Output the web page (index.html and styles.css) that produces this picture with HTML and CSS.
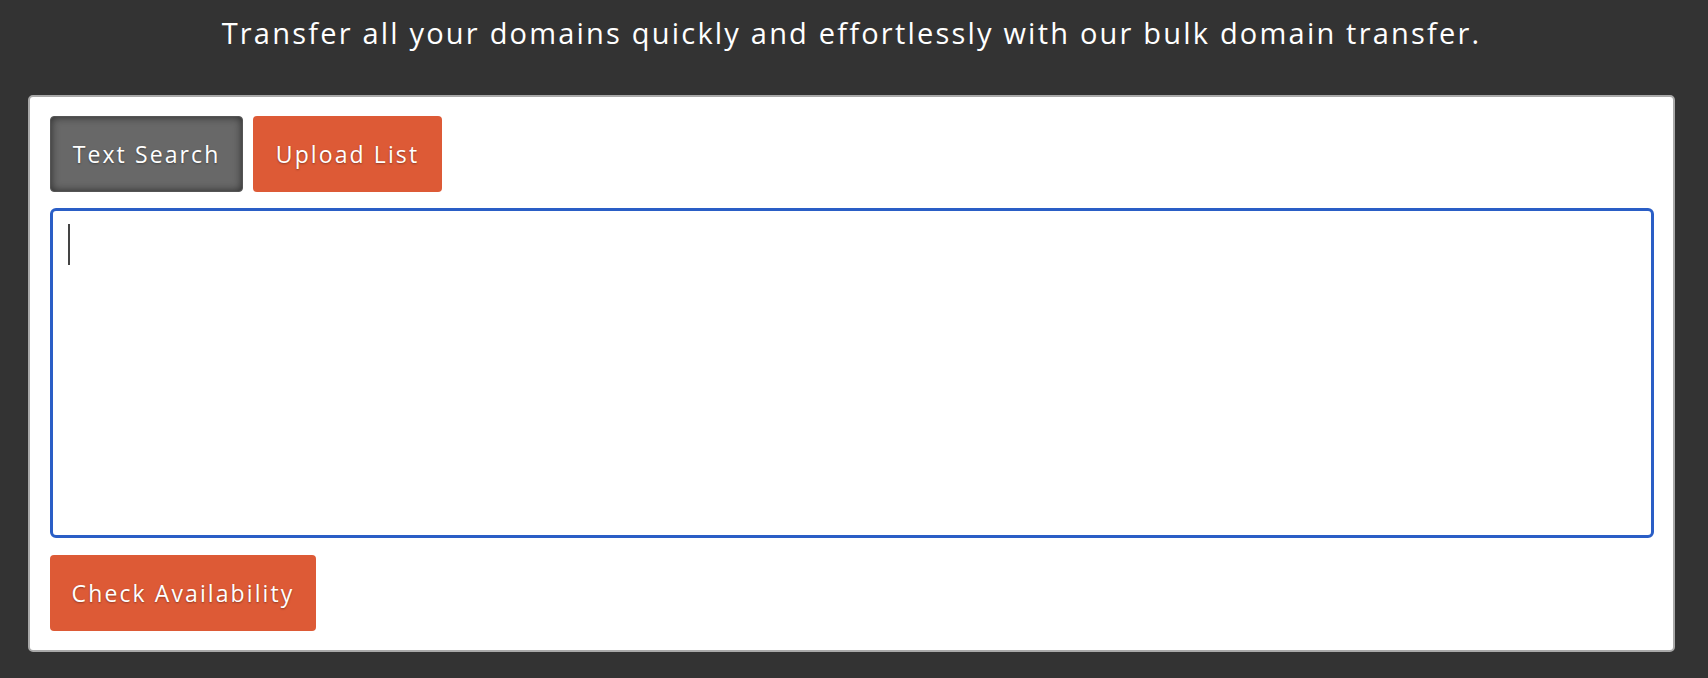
FILE: index.html
```html
<!DOCTYPE html>
<html lang="en">
<head>
<meta charset="utf-8">
<title>Bulk Domain Transfer</title>
<link rel="stylesheet" href="styles.css">
</head>
<body>
<div class="page">
  <p class="intro">Transfer all your domains quickly and effortlessly with our bulk domain transfer.</p>
  <div class="card">
    <div class="tabs">
      <button class="btn btn-gray">Text Search</button>
      <button class="btn btn-orange">Upload List</button>
    </div>
    <div class="field">
      <textarea class="domains" aria-label="Domains"></textarea>
      <span class="caret"></span>
    </div>
    <div class="actions">
      <button class="btn btn-orange">Check Availability</button>
    </div>
  </div>
</div>
</body>
</html>
```
FILE: styles.css
```css
html, body {
  margin: 0;
  padding: 0;
  background: #333333;
}
.page {
  padding: 0 33px 0 28px;
  font-family: "Open Sans", "Liberation Sans", sans-serif;
}
.intro {
  margin: 0;
  height: 95px;
  padding-top: 13px;
  box-sizing: border-box;
  text-align: center;
  color: #ffffff;
  font-size: 29px;
  line-height: 40px;
  letter-spacing: 2.2px;
  font-weight: 400;
}
.card {
  background: #ffffff;
  border: 2px solid #a9a9a9;
  border-radius: 5px;
  padding: 19px 19px 19px 20px;
  display: flex;
  flex-direction: column;
}
.tabs {
  display: flex;
  gap: 10px;
}
.btn {
  font-family: "Open Sans", "Liberation Sans", sans-serif;
  font-size: 23px;
  height: 76px;
  padding: 0;
  border: none;
  border-radius: 4px;
  color: #ffffff;
  cursor: pointer;
  text-shadow: 0 1px 2px rgba(0, 0, 0, 0.35);
  letter-spacing: 2.1px;
}
.btn-gray {
  width: 193px;
  background: #686868;
  box-shadow: inset 0 0 8px rgba(0, 0, 0, 0.6);
  border: 1px solid #555;
}
.btn-orange {
  background: #dd5a36;
}
.tabs .btn-orange {
  width: 189px;
}
.field {
  position: relative;
  margin-top: 16px;
  display: flex;
}
.domains {
  flex: 1;
  height: 330px;
  box-sizing: border-box;
  border: 3px solid #2a5ec6;
  border-radius: 6px;
  outline: none;
  resize: none;
  caret-color: transparent;
  padding: 13px 16px;
  font-size: 24px;
}
.caret {
  position: absolute;
  left: 18px;
  top: 16px;
  width: 2px;
  height: 41px;
  background: #444444;
}
.actions {
  margin-top: 17px;
  display: flex;
}
.actions .btn {
  width: 266px;
}
```
